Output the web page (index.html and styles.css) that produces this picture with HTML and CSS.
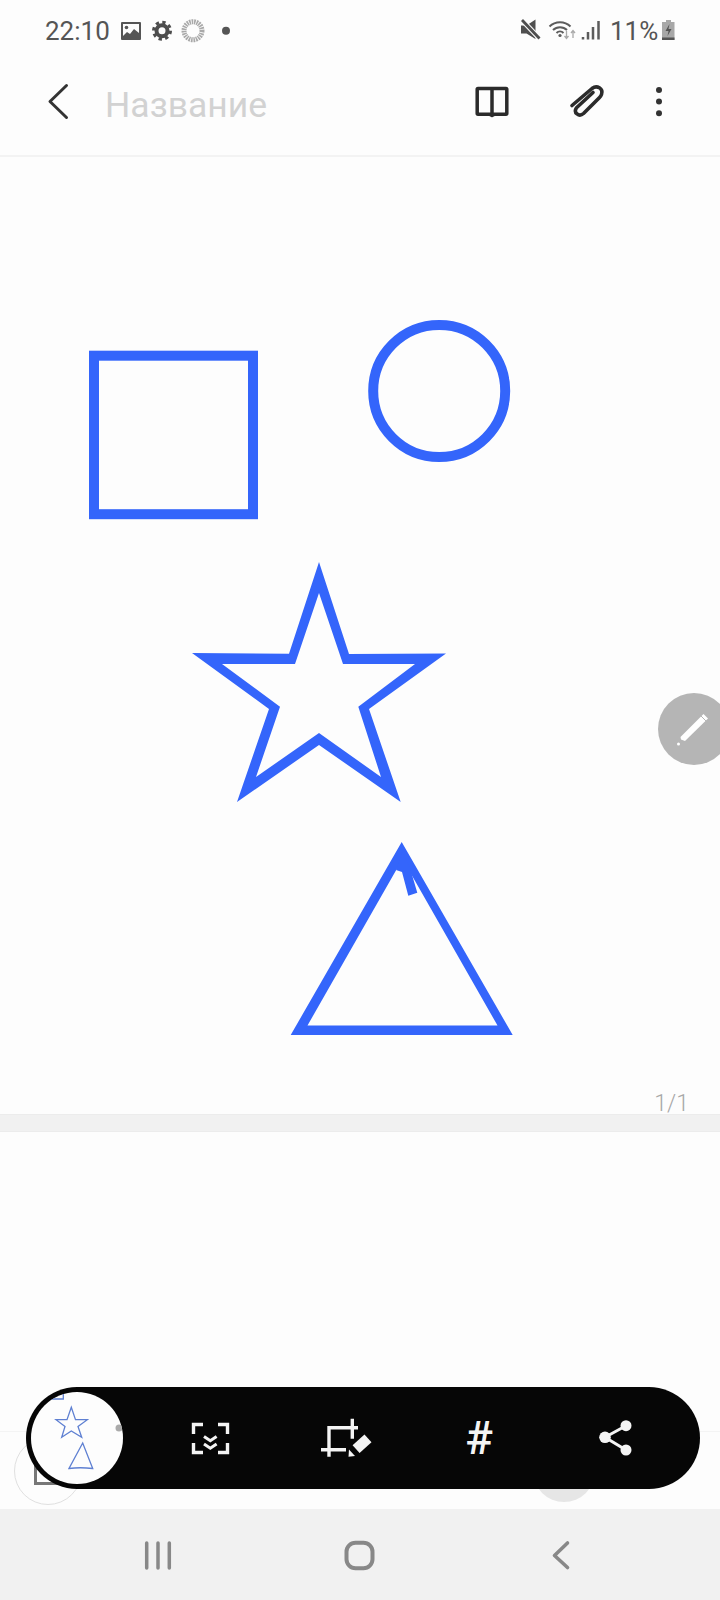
FILE: index.html
```html
<!DOCTYPE html>
<html>
<head>
    <title>Название</title>
    <link rel="stylesheet" href="styles.css">
</head>
<body>
    <div class="status-bar">
        <span class="clock">22:10</span>
        <svg class="status-left" viewBox="118 16 115 29" width="115" height="29">
            <!-- gallery -->
            <rect x="121" y="22" width="20" height="18" rx="1" fill="#555"/>
            <rect x="123" y="24" width="16" height="12" fill="#fdfdfd"/>
            <circle cx="126.500" cy="27.500" r="1.800" fill="#555"/>
            <path d="M123 36l4-4 3 2 4-5 5 4v5z" fill="#555"/>
            <!-- settings -->
            <circle cx="162" cy="30.700" r="5.500" fill="none" stroke="#4d4d4d" stroke-width="4"/>
            <circle cx="162" cy="30.700" r="8.500" fill="none" stroke="#4d4d4d" stroke-width="3" stroke-dasharray="3.340 3.340"/>
            <!-- loading ring -->
            <circle cx="193" cy="30.700" r="9" fill="none" stroke="#a9a9a9" stroke-width="5" stroke-dasharray="1.600 .8"/>
            <circle cx="226" cy="30.700" r="4" fill="#555"/>
        </svg>
        <svg class="status-right" viewBox="518 16 84 29" width="84" height="29">
            <!-- mute -->
            <path d="M521 25.500h5.500l9-6v19.500l-9-5.500h-5.500z" fill="#4f4f4f"/>
            <path d="M521 19l18 19" stroke="#fdfdfd" stroke-width="5"/>
            <path d="M522 20l17.500 18.500" stroke="#4f4f4f" stroke-width="2.800"/>
            <!-- wifi -->
            <g fill="none" stroke="#5c5c5c" stroke-width="2">
                <path d="M549.500 26.500a15 15 0 0 1 21 0"/>
                <path d="M553 30a10 10 0 0 1 14 0"/>
                <path d="M556.500 33a5 5 0 0 1 7 0"/>
            </g>
            <circle cx="560" cy="35.500" r="1.600" fill="#5c5c5c"/>
            <path d="M566.500 31v7m-2-2l2 2.500 2-2.500M573 38v-7m-2 2l2-2.500 2 2.500" fill="none" stroke="#aaa" stroke-width="1.300"/>
            <!-- signal -->
            <g stroke="#5c5c5c" stroke-width="2.500">
                <path d="M583 37v2.500M588 32v7.500M593 27v12.500M598.500 21v18.500"/>
            </g>
        </svg>
        <span class="battery-level">11%</span>
        <svg class="battery" viewBox="660 16 18 29" width="18" height="29">
            <path d="M666 20h5v2h3.500v18h-12.500v-18h4z" fill="#a8a8a8"/>
            <rect x="662" y="37.500" width="12.500" height="2.500" fill="#555"/>
            <path d="M669.500 24l-4 7h3l-1 5 4-7h-3z" fill="#555"/>
        </svg>
    </div>

    <div class="toolbar">
        <svg viewBox="45 80 30 45" width="30" height="45">
            <path d="M67.500 86.500l-16.500 16 16.500 16" fill="none" stroke="#333" stroke-width="3" stroke-linecap="round" stroke-linejoin="round"/>
        </svg>
        <span class="title">Название</span>
        <svg class="book" viewBox="470 80 44 45" width="44" height="45">
            <path d="M492 89.500h14c.6 0 .8.3.8.8v24.200c0 .5-.2.700-.8.700h-11.500l-2.500 1.200-2.500-1.200h-11.500c-.6 0-.8-.2-.8-.7v-24.200c0-.5.2-.8.8-.8zv26" fill="none" stroke="#2b2b2b" stroke-width="3.500" stroke-linejoin="round"/>
        </svg>
        <svg class="clip" viewBox="566 80 42 45" width="42" height="45">
            <path d="M572 106.500l20-17c5-3.800 11.500 0 9.500 6-.5 1.400-1.200 2.300-2.200 3.300l-15.800 15.700c-4.500 4-10.500-.8-7-5.800l16.500-15.200" fill="none" stroke="#2b2b2b" stroke-width="3.600" stroke-linecap="round" stroke-linejoin="round"/>
        </svg>
        <svg class="dots" viewBox="650 80 18 45" width="18" height="45">
            <circle cx="659" cy="91" r="3" fill="#333"/>
            <circle cx="659" cy="102.500" r="3" fill="#333"/>
            <circle cx="659" cy="114.300" r="3" fill="#333"/>
        </svg>
    </div>

    <div class="canvas">
        <svg class="drawing" viewBox="0 157 720 898" width="720" height="898">
            <rect x="94" y="355.700" width="159" height="158.500" fill="none" stroke="#3465fb" stroke-width="10"/>
            <circle cx="439.200" cy="391" r="66" fill="none" stroke="#3465fb" stroke-width="10"/>
            <path fill-rule="evenodd" fill="#3465fb" d="M319 562L349 654L446 653.500L369 709L400.700 802L319 745L237 802L269 709L192 653L289 653.700Z M319 593L343 664H415L358.300 706.700L381 777L319 733L256 777L280 706.700L222 664H295Z"/>
            <path fill-rule="evenodd" fill="#3465fb" d="M401.700 842L512.700 1035H290.700Z M402.500 859L307.500 1025.500H497.500Z"/>
            <path fill="#3465fb" d="M396 870L402 872L408.300 895.700L417.300 892.700L410 868L402 852Z"/>
        </svg>
        <div class="page-number">1/1</div>
    </div>
    <div class="page-gap"></div>
    <div class="blank"></div>

    <div class="bottom-tools">
        <div class="round-btn"><div class="square-icon"></div></div>
        <div class="round-grey"></div>
    </div>

    <div class="nav-bar">
        <svg viewBox="140 1530 36 50" width="36" height="50">
            <path d="M146.700 1543v25M158 1543v25M169.300 1543v25" stroke="#888" stroke-width="3.500" stroke-linecap="round"/>
        </svg>
        <svg viewBox="341.500 1530 40 50" width="40" height="50">
            <rect x="347" y="1542.700" width="26" height="25.500" rx="9" fill="none" stroke="#888" stroke-width="4"/>
        </svg>
        <svg viewBox="546 1530 30 50" width="30" height="50">
            <path d="M567.500 1543l-13 12.500 13 12" fill="none" stroke="#888" stroke-width="3.600" stroke-linecap="round" stroke-linejoin="round"/>
        </svg>
    </div>

    <div class="action-pill">
        <div class="thumb">
            <svg viewBox="31 1393 92 92" width="92" height="92">
                <g fill="none" stroke="#5f80d2" stroke-width="1.300">
                    <path d="M50 1400h13.300v-8"/>
                    <path d="M71.300 1408.300L75.500 1420.700H87.300L78 1427.500L81.700 1438.300L71.300 1432L61.700 1438.300L65 1427.500L56 1420.700H67Z"/>
                    <path d="M82.700 1444L69 1469.500Q80 1468 92.700 1469.500Z"/>
                </g>
                <circle cx="119" cy="1429" r="3.500" fill="#aaa"/>
            </svg>
        </div>
        <div class="actions">
            <div class="action">
                <svg viewBox="188 1419 45 39" width="45" height="39">
                    <path d="M203 1424.500h-9.500v9.500M218 1424.500h9.500v9.500M203 1452.500h-9.500v-9.500M218 1452.500h9.500v-9.500" fill="none" stroke="#f4f4f4" stroke-width="3.400"/>
                    <path d="M204 1436.500l6.300 4.300 6.300-4.300M204 1444l6.300 4.300 6.300-4.300" fill="none" stroke="#f4f4f4" stroke-width="3"/>
                </svg>
            </div>
            <div class="action">
                <svg viewBox="318 1414 56 46" width="56" height="46">
                    <path d="M321 1448.700h25M329 1455.700v-29h29M352.300 1417.700v20" fill="none" stroke="#f4f4f4" stroke-width="3.400"/>
                    <rect x="354" y="1437.500" width="16" height="10.500" transform="rotate(-42 362 1442.700)" fill="#f4f4f4"/>
                    <path d="M349 1448.500l6 6.500-6.500 .8z" fill="#f4f4f4"/>
                </svg>
            </div>
            <div class="action"><span class="hash">#</span></div>
            <div class="action">
                <svg viewBox="596 1419 38 40" width="38" height="40">
                    <path d="M625 1426.700l-21 11.600 21 12.700" fill="none" stroke="#f4f4f4" stroke-width="3"/>
                    <circle cx="625" cy="1426.700" r="5.500" fill="#f4f4f4"/>
                    <circle cx="604" cy="1438.300" r="5.800" fill="#f4f4f4"/>
                    <circle cx="625" cy="1451" r="5.500" fill="#f4f4f4"/>
                </svg>
            </div>
        </div>
    </div>

    <div class="pen-btn">
        <svg viewBox="0 0 40 40" width="40" height="40">
            <path d="M27.500 5L32 9.500L9 32L5 30.500L4.500 28Z" fill="#fff"/>
            <path d="M25 7l5 5" stroke="#b5b5b5" stroke-width="1"/>
            <circle cx="2.500" cy="35" r="1.500" fill="#fff"/>
        </svg>
    </div>
</body>
</html>
```

FILE: styles.css
```css
html, body {
    margin: 0;
    padding: 0;
}
body {
    position: relative;
    width: 720px;
    height: 1600px;
    overflow: hidden;
    display: flex;
    flex-direction: column;
    background-color: #fdfdfd;
    font-family: Roboto, "Noto Sans", sans-serif;
}
svg {
    display: block;
    flex-shrink: 0;
}

/* status bar */
.status-bar {
    height: 61px;
    display: flex;
    align-items: center;
    padding-left: 45px;
    font-size: 26px;
    color: #555;
}
.clock {
    width: 73px;
}
.status-right {
    margin-left: auto;
}
.battery-level {
    margin-left: 8px;
    width: 50px;
}
.battery {
    margin-right: 42px;
}

/* top toolbar */
.toolbar {
    height: 96px;
    box-sizing: border-box;
    padding: 0 52px 13px 44px;
    display: flex;
    align-items: center;
    border-bottom: 2px solid #f3f3f3;
}
.title {
    margin-left: 31px;
    padding-top: 6px;
    font-size: 35.5px;
    color: #d2d2d2;
}
.book {
    margin-left: auto;
}
.clip {
    margin-left: 52px;
}
.dots {
    margin-left: 42px;
}

/* note page */
.canvas {
    height: 957px;
}
.page-number {
    height: 59px;
    box-sizing: border-box;
    padding: 37px 31px 0 0;
    text-align: right;
    font-size: 23px;
    line-height: 23px;
    font-weight: 300;
    color: #a8a8a8;
}
.page-gap {
    height: 18px;
    box-sizing: border-box;
    background-color: #f1f1f1;
    border-top: 1px solid #ececec;
    border-bottom: 1px solid #ececec;
}
.blank {
    flex: 1;
}

/* toolbar under the pill */
.bottom-tools {
    height: 78px;
    box-sizing: border-box;
    padding: 0 125px 0 14px;
    display: flex;
    align-items: center;
    justify-content: space-between;
    border-top: 1px solid #f4f4f4;
}
.round-btn {
    width: 68px;
    height: 68px;
    box-sizing: border-box;
    border: 1.5px solid #e0e0e0;
    border-radius: 50%;
    display: flex;
    align-items: center;
    justify-content: center;
}
.square-icon {
    width: 28px;
    height: 28px;
    box-sizing: border-box;
    border: 3px solid #777;
}
.round-grey {
    width: 62px;
    height: 62px;
    border-radius: 50%;
    background-color: #e6e6e6;
}

/* navigation bar */
.nav-bar {
    height: 91px;
    box-sizing: border-box;
    padding: 0 144px 0 140px;
    display: flex;
    align-items: center;
    justify-content: space-between;
    background-color: #f1f1f1;
}

/* floating pill */
.action-pill {
    position: absolute;
    left: 26px;
    top: 1387px;
    width: 674px;
    height: 102px;
    box-sizing: border-box;
    padding-left: 5px;
    display: flex;
    align-items: center;
    border-radius: 51px;
    background-color: #060606;
}
.thumb {
    width: 92px;
    height: 92px;
    border-radius: 50%;
    overflow: hidden;
    background-color: #fdfdfd;
}
.actions {
    margin-left: 20px;
    display: flex;
}
.action {
    width: 135px;
    height: 102px;
    display: flex;
    align-items: center;
    justify-content: center;
}
.hash {
    margin-right: 3px;
    font-size: 46px;
    font-weight: 500;
    color: #f4f4f4;
}

/* pen button on the right edge */
.pen-btn {
    position: absolute;
    left: 658px;
    top: 693px;
    width: 72px;
    height: 72px;
    border-radius: 50%;
    background-color: #b5b5b5;
    display: flex;
    align-items: center;
    padding-left: 18px;
    box-sizing: border-box;
}
```
